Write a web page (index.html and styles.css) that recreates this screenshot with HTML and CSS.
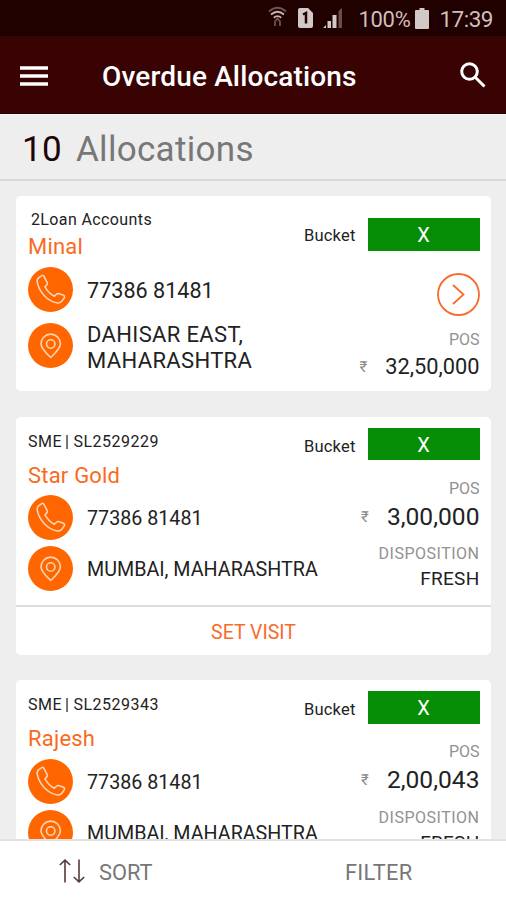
FILE: index.html
```html
<!DOCTYPE html>
<html lang="en">
<head>
    <meta charset="UTF-8">
    <meta name="viewport" content="width=device-width, initial-scale=1.0">
    <title>Overdue Allocations</title>
    <link rel="stylesheet" href="styles.css">
</head>
<body>
    <!-- Shared icons -->
    <svg class="icon-defs" width="0" height="0">
        <symbol id="icon-phone" viewBox="0 0 45 45">
            <path d="M15.600 8.800Q14.800 8 13.800 8.600L10.800 10.600Q8.600 12.300 9.300 15.300C11.200 24.500 19 34.300 29.500 36Q32.300 36.200 33.800 34.300L36.400 30.600Q37 29 35.500 28.300L30.500 26.600Q29.200 26.400 28.400 27.300L26.300 29.300Q20.300 26 17 19.900L19 17.600Q19.700 16.600 19.200 15.500Z"/>
        </symbol>
        <symbol id="icon-pin" viewBox="0 0 45 45">
            <path d="M22.700 34.500Q13 25.500 13 20.800A9.700 9.700 0 0 1 32.400 20.800Q32.400 25.500 22.700 34.500Z"/>
            <circle cx="22.700" cy="21" r="4.200"/>
        </symbol>
    </svg>

    <div class="screen">
        <div class="status-bar">
            <svg class="status-icons" width="78" height="24" viewBox="0 0 78 24">
                <g class="wifi">
                    <path class="faint" d="M1 5.500Q9.500 -2 18 5.500"/>
                    <path d="M3 8.500Q9.500 3 16 8.500M5.800 11.700Q9.500 8.500 13.200 11.700"/>
                    <path class="faint" d="M7 20V15.500L9.500 12.500L12 15.500V20"/>
                </g>
                <path class="sim" d="M34.500 2H40L45 7V20Q45 22 43 22H32Q30 22 30 20V4Q30 2 32 2Z"/>
                <path class="sim-one" d="M35 8.500L38 7V17.500"/>
                <path class="signal" d="M55 22L58 19V22ZM59.500 15H63V22H59.500ZM64.500 9H68.500V22H64.500Z"/>
                <path class="signal-faint" d="M70.500 5L74 2V22H70.500Z"/>
            </svg>
            <span class="percent">100%</span>
            <svg class="battery" width="14" height="21" viewBox="0 0 14 21">
                <path d="M4.500 0H9.500V2H13Q14 2 14 3V20Q14 21 13 21H1Q0 21 0 20V3Q0 2 1 2H4.500Z"/>
            </svg>
            <span class="clock">17:39</span>
        </div>

        <div class="app-bar">
            <svg class="menu-icon" width="28" height="20" viewBox="0 0 28 20">
                <path d="M0 2H28M0 10H28M0 18H28"/>
            </svg>
            <h1>Overdue Allocations</h1>
            <svg class="search-icon" width="26" height="26" viewBox="0 0 26 26">
                <circle cx="9.500" cy="9.500" r="7.800"/>
                <path d="M15 15L24.500 24.500"/>
            </svg>
        </div>

        <div class="count-bar">
            <span class="count">10</span>
            <span class="count-label">Allocations</span>
        </div>

        <div class="list">
            <div class="card card-group">
                <div class="card-body">
                    <div class="left">
                        <div class="account">2Loan Accounts</div>
                        <div class="name">Minal</div>
                        <div class="contact">
                            <svg class="round-icon"><use href="#icon-phone"/></svg>
                            <span>77386 81481</span>
                        </div>
                        <div class="contact">
                            <svg class="round-icon"><use href="#icon-pin"/></svg>
                            <span class="address">DAHISAR EAST,<br>MAHARASHTRA</span>
                        </div>
                    </div>
                    <div class="right">
                        <div class="bucket"><span>Bucket</span><span class="bucket-value">X</span></div>
                        <svg class="arrow" width="43" height="43" viewBox="0 0 43 43">
                            <circle cx="21.500" cy="21.500" r="20.500"/>
                            <path d="M16 12L26.500 21.500L16 31"/>
                        </svg>
                        <div class="label pos">POS</div>
                        <div class="amount"><span class="rupee">₹</span><span class="figure">32,50,000</span></div>
                    </div>
                </div>
            </div>

            <div class="card">
                <div class="card-body">
                    <div class="left">
                        <div class="account">SME<span class="divider">|</span>SL2529229</div>
                        <div class="name">Star Gold</div>
                        <div class="contact">
                            <svg class="round-icon"><use href="#icon-phone"/></svg>
                            <span>77386 81481</span>
                        </div>
                        <div class="contact">
                            <svg class="round-icon"><use href="#icon-pin"/></svg>
                            <span class="address">MUMBAI, MAHARASHTRA</span>
                        </div>
                    </div>
                    <div class="right">
                        <div class="bucket"><span>Bucket</span><span class="bucket-value">X</span></div>
                        <div class="label pos">POS</div>
                        <div class="amount"><span class="rupee">₹</span><span class="figure">3,00,000</span></div>
                        <div class="label disposition">DISPOSITION</div>
                        <div class="state">FRESH</div>
                    </div>
                </div>
                <div class="set-visit">SET VISIT</div>
            </div>

            <div class="card">
                <div class="card-body">
                    <div class="left">
                        <div class="account">SME<span class="divider">|</span>SL2529343</div>
                        <div class="name">Rajesh</div>
                        <div class="contact">
                            <svg class="round-icon"><use href="#icon-phone"/></svg>
                            <span>77386 81481</span>
                        </div>
                        <div class="contact">
                            <svg class="round-icon"><use href="#icon-pin"/></svg>
                            <span class="address">MUMBAI, MAHARASHTRA</span>
                        </div>
                    </div>
                    <div class="right">
                        <div class="bucket"><span>Bucket</span><span class="bucket-value">X</span></div>
                        <div class="label pos">POS</div>
                        <div class="amount"><span class="rupee">₹</span><span class="figure">2,00,043</span></div>
                        <div class="label disposition">DISPOSITION</div>
                        <div class="state">FRESH</div>
                    </div>
                </div>
            </div>
        </div>

        <div class="bottom-bar">
            <div class="sort">
                <svg width="26" height="24" viewBox="0 0 26 24">
                    <path d="M6 23.500V1.500M.8 6L6 1.200L11.200 6M20 .5V22.500M14.800 18L20 22.800L25.200 18"/>
                </svg>
                <span>SORT</span>
            </div>
            <div class="filter">FILTER</div>
        </div>
    </div>
</body>
</html>
```

FILE: styles.css
```css
body {
    margin: 0;
    font-family: Roboto, "Liberation Sans", sans-serif;
    color: #222;
}
svg {
    fill: none;
    flex: none;
}
.icon-defs {
    display: none;
}
.screen {
    display: flex;
    flex-direction: column;
    height: 900px;
    overflow: hidden;
    background-color: #eee;
}

/* Status bar */
.status-bar {
    display: flex;
    flex: none;
    align-items: center;
    justify-content: flex-end;
    box-sizing: border-box;
    height: 36px;
    padding: 2px 13px 0 0;
    background-color: #210000;
    color: #cdbfbf;
}
.status-icons {
    margin-right: 12px;
    margin-bottom: 2px;
}
.percent {
    font-size: 22px;
    letter-spacing: -0.3px;
}
.clock {
    font-size: 22.5px;
    letter-spacing: -0.5px;
}
.wifi {
    stroke: #c4b4b4;
    stroke-width: 1.8;
}
.faint {
    stroke: #6f5252;
}
.sim, .battery {
    fill: #d3c8c8;
}
.sim-one {
    stroke: #210000;
    stroke-width: 2.5;
}
.signal {
    fill: #d3c8c8;
}
.signal-faint {
    fill: #6b4d4d;
}
.battery {
    margin: 0 10px 2px 5px;
}

/* Title bar */
.app-bar {
    display: flex;
    flex: none;
    align-items: center;
    box-sizing: border-box;
    height: 78px;
    padding: 2px 20px 0;
    background-color: #390303;
    border-bottom: 1px solid #240000;
    color: #fff;
}
.app-bar h1 {
    flex: 1;
    margin: 2px 0 0 54px;
    font-size: 28px;
    font-weight: 500;
    letter-spacing: 0.15px;
}
.menu-icon {
    stroke: #fff;
    stroke-width: 3.6;
}
.search-icon {
    stroke: #fff;
    stroke-width: 3;
    margin-bottom: 2px;
}
.count-bar {
    display: flex;
    flex: none;
    align-items: center;
    box-sizing: border-box;
    height: 67px;
    padding: 4px 0 0 22px;
    border-bottom: 2px solid #d9d9d9;
    border-top: 1px solid #fafafa;
    font-size: 35px;
    letter-spacing: 0.3px;
}
.count {
    color: #1d0508;
    margin-right: 14px;
}
.count-label {
    color: #777;
}

/* Cards */
.list {
    flex: 1;
    min-height: 0;
    overflow: hidden;
    padding: 15px 15px 0 16px;
}
.card {
    box-sizing: border-box;
    height: 238px;
    margin-bottom: 25.5px;
    background-color: #fff;
    border-radius: 5px;
}
.card-group {
    height: 195px;
}
.card-body {
    display: flex;
    justify-content: space-between;
    box-sizing: border-box;
    height: 188px;
    padding: 0 11.5px 0 12px;
}
.left {
    width: 270px;
    padding-top: 12px;
    white-space: nowrap;
}
.account {
    font-size: 16px;
    letter-spacing: 0.5px;
    line-height: 25px;
}
.divider {
    margin: 0 4px 0 3px;
}
.name {
    margin: 7px 0 4.5px;
    color: #fa6a1c;
    font-size: 22px;
    letter-spacing: 0.2px;
    line-height: 30px;
}
.contact {
    display: flex;
    align-items: center;
    gap: 14px;
    margin-bottom: 6px;
    font-size: 19.7px;
    line-height: 26px;
}
.contact span {
    padding-top: 3px;
}
.round-icon {
    width: 45px;
    height: 45px;
    border-radius: 50%;
    background-color: #ff6600;
    stroke: #ffd3b5;
    stroke-width: 1.6;
}
.right {
    display: flex;
    flex: none;
    flex-direction: column;
    align-items: flex-end;
    width: 180px;
    margin-left: -20px;
    padding-top: 11px;
}
.bucket {
    display: flex;
    align-items: center;
    gap: 12px;
    height: 32.5px;
    font-size: 16.5px;
    letter-spacing: 0.2px;
}
.bucket span:first-child {
    padding-top: 5px;
}
.bucket-value {
    width: 112px;
    background-color: #058d05;
    color: #fff;
    font-size: 20px;
    line-height: 35px;
    height: 32.5px;
    text-align: center;
}
.label {
    color: #919191;
    font-size: 16px;
    line-height: 21px;
}
.pos {
    margin: 17.5px 0 3px;
}
.amount {
    display: flex;
    align-items: center;
    font-size: 24.6px;
    line-height: 30px;
}
.rupee {
    margin-right: 18px;
    color: #888;
    font-size: 15px;
}
.disposition {
    margin-top: 11.5px;
    letter-spacing: 0.5px;
}
.state {
    font-size: 19px;
    line-height: 30px;
    letter-spacing: 0.3px;
}
.set-visit {
    box-sizing: border-box;
    height: 50px;
    border-top: 2px solid #ddd;
    color: #f96b2b;
    font-size: 19.5px;
    line-height: 52px;
    text-align: center;
}

/* Grouped customer, no visit row */
.card-group .account {
    padding-left: 3px;
    letter-spacing: 0.38px;
    line-height: 24px;
}
.card-group .name {
    margin-top: 0;
}
.card-group .contact {
    margin-bottom: 5px;
    font-size: 21.6px;
}
.card-group .address {
    padding-top: 5px;
    font-size: 22px;
    letter-spacing: 0.35px;
}
.card-group .right {
    padding-top: 22px;
}
.card-group .bucket span:first-child {
    padding-top: 3px;
}
.card-group .pos {
    margin: 13px 0 2px;
}
.card-group .amount {
    font-size: 21.8px;
}
.arrow {
    margin-top: 22.5px;
    stroke: #f96b2b;
    stroke-width: 1.8;
}

/* Sort and filter */
.bottom-bar {
    display: flex;
    flex: none;
    box-sizing: border-box;
    height: 61px;
    border-top: 2px solid #e3e3e3;
    background-color: #fff;
    color: #777;
    font-size: 21.8px;
}
.sort, .filter {
    display: flex;
    align-items: center;
    padding-top: 3px;
}
.sort {
    gap: 14px;
    width: 194px;
    padding-left: 59px;
}
.filter {
    padding-left: 92px;
    letter-spacing: 0.3px;
}
.sort svg {
    margin-bottom: 3px;
    stroke: #59393b;
    stroke-width: 1.6;
}
```
